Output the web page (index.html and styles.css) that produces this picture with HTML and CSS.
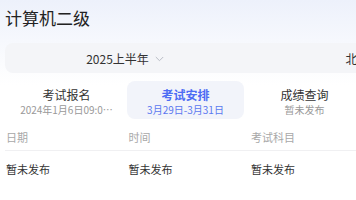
FILE: index.html
```html
<!DOCTYPE html>
<html lang="zh">
<head>
<meta charset="utf-8">
<link rel="stylesheet" href="styles.css">
</head>
<body>
<div class="page">
  <h1 class="title">计算机二级</h1>
  <div class="filter-bar">
    <div class="filter-item">
      <span>2025上半年</span>
      <svg class="chev" width="9" height="6" viewBox="0 0 9 6"><path d="M0.8 1 L4.5 4.7 L8.2 1" fill="none" stroke="#b8bcc4" stroke-width="1"/></svg>
    </div>
    <div class="filter-item">
      <span>北京</span>
      <svg class="chev" width="9" height="6" viewBox="0 0 9 6"><path d="M0.8 1 L4.5 4.7 L8.2 1" fill="none" stroke="#b8bcc4" stroke-width="1"/></svg>
    </div>
  </div>
  <div class="tabs">
    <div class="tab">
      <div class="tab-title">考试报名</div>
      <div class="tab-sub">2024年1月6日09:0…</div>
    </div>
    <div class="tab active">
      <div class="tab-title">考试安排</div>
      <div class="tab-sub">3月29日-3月31日</div>
    </div>
    <div class="tab">
      <div class="tab-title">成绩查询</div>
      <div class="tab-sub">暂未发布</div>
    </div>
  </div>
  <div class="table">
    <div class="row head">
      <div class="cell">日期</div>
      <div class="cell">时间</div>
      <div class="cell">考试科目</div>
    </div>
    <div class="row">
      <div class="cell">暂未发布</div>
      <div class="cell">暂未发布</div>
      <div class="cell">暂未发布</div>
    </div>
  </div>
</div>
</body>
</html>
```
FILE: styles.css
```css
html, body {
  margin: 0;
  padding: 0;
}
body {
  width: 356px;
  height: 200px;
  overflow: hidden;
  background: linear-gradient(180deg, #edf1fb 0px, #f6f8fd 40px, #ffffff 85px);
  font-family: "Noto Sans CJK SC", "Noto Sans", sans-serif;
  color: #333;
}
.page {
  width: 500px;
  padding: 6px 0 0 5px;
}
.title {
  margin: 0;
  font-size: 17px;
  line-height: 24px;
  font-weight: 400;
  color: #222;
}
.filter-bar {
  margin-top: 13px;
  display: flex;
  width: 480px;
  height: 30px;
  background: #f4f5f8;
  border-radius: 8px;
}
.filter-item {
  width: 240px;
  display: flex;
  align-items: center;
  justify-content: center;
  gap: 6px;
  font-size: 12px;
  color: #333;
}
.chev {
  display: block;
  margin-top: 1px;
}
.tabs {
  display: flex;
  gap: 2px;
  margin-top: 8px;
  margin-left: 3px;
}
.tab {
  width: 117px;
  height: 38px;
  box-sizing: border-box;
  padding: 6px 8px 0;
  border-radius: 8px;
  text-align: center;
}
.tab.active {
  background: #f2f4fa;
}
.tab-title {
  font-size: 12px;
  line-height: 16px;
  color: #333;
}
.tab-sub {
  font-size: 10px;
  line-height: 13px;
  color: #999;
  white-space: nowrap;
  overflow: hidden;
}
.tab.active .tab-title {
  color: #4d6cf4;
  font-weight: 700;
}
.tab.active .tab-sub {
  color: #5a78f0;
}
.table {
  width: 351px;
}
.row {
  display: flex;
}
.row.head {
  padding: 10px 0 5px;
  border-bottom: 1px solid #f0f0f2;
}
.row:not(.head) {
  padding-top: 10px;
}
.cell {
  flex: 0 0 122.5px;
  box-sizing: border-box;
  padding-left: 1px;
  font-size: 11px;
  line-height: 16px;
  white-space: nowrap;
}
.head .cell {
  color: #a8a8a8;
}
```
